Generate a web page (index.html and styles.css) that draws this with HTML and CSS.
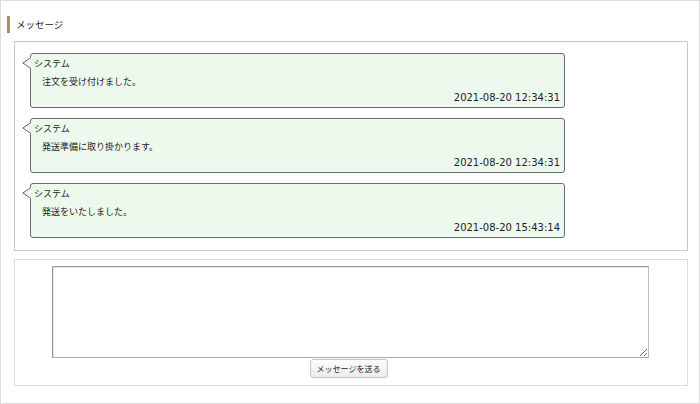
FILE: index.html
```html
<!DOCTYPE html>
<html lang="ja">
<head>
<meta charset="utf-8">
<title>メッセージ</title>
<link rel="stylesheet" href="styles.css">
</head>
<body>
<div class="page">
  <h2 class="heading">メッセージ</h2>
  <div class="message-list">
    <div class="bubble">
      <svg class="arrow" width="10" height="12" viewBox="0 0 10 12"><polygon points="10,0.5 8.5,0.5 0.8,6 8.5,11.5 10,11.5" fill="#eef9ee"/><polyline points="9,0.5 0.8,6 9,11.5" fill="none" stroke="#6a6a6a" stroke-width="1"/></svg>
      <div class="sender">システム</div>
      <div class="text">注文を受け付けました。</div>
      <div class="time">2021-08-20 12:34:31</div>
    </div>
    <div class="bubble">
      <svg class="arrow" width="10" height="12" viewBox="0 0 10 12"><polygon points="10,0.5 8.5,0.5 0.8,6 8.5,11.5 10,11.5" fill="#eef9ee"/><polyline points="9,0.5 0.8,6 9,11.5" fill="none" stroke="#6a6a6a" stroke-width="1"/></svg>
      <div class="sender">システム</div>
      <div class="text">発送準備に取り掛かります。</div>
      <div class="time">2021-08-20 12:34:31</div>
    </div>
    <div class="bubble">
      <svg class="arrow" width="10" height="12" viewBox="0 0 10 12"><polygon points="10,0.5 8.5,0.5 0.8,6 8.5,11.5 10,11.5" fill="#eef9ee"/><polyline points="9,0.5 0.8,6 9,11.5" fill="none" stroke="#6a6a6a" stroke-width="1"/></svg>
      <div class="sender">システム</div>
      <div class="text">発送をいたしました。</div>
      <div class="time">2021-08-20 15:43:14</div>
    </div>
  </div>
  <form class="reply-form">
    <textarea class="reply-input"></textarea>
    <button type="button" class="send-btn">メッセージを送る</button>
  </form>
</div>
</body>
</html>
```

FILE: styles.css
```css
* { box-sizing: border-box; }
html, body { margin: 0; padding: 0; background: #fff; }
body {
  font-family: "Noto Sans CJK JP", "Noto Sans", sans-serif;
  color: #222;
}
.page {
  width: 700px;
  height: 404px;
  border: 1px solid #dcdcdc;
  display: flex;
  flex-direction: column;
}
.heading {
  margin: 15px 0 0 6px;
  border-left: 3px solid #a8906a;
  padding-left: 6px;
  height: 17px;
  line-height: 17px;
  font-size: 9.5px;
  font-weight: normal;
  color: #222;
}
.message-list {
  margin: 8px 11px 0 13px;
  border: 1px solid #c8c8c8;
  padding: 11px 15px 12px 15px;
  display: flex;
  flex-direction: column;
  gap: 10px;
}
.bubble {
  position: relative;
  width: 535px;
  background: #eef9ee;
  border: 1px solid #6a6a6a;
  border-radius: 3px;
  padding: 3px 4px 2px 3px;
  font-size: 9px;
}
.arrow {
  position: absolute;
  left: -9px;
  top: 3px;
  display: block;
}
.sender {
  line-height: 14px;
  height: 14px;
}
.text {
  margin-top: 4px;
  margin-left: 8px;
  line-height: 14px;
  height: 14px;
}
.time {
  margin-top: 2px;
  line-height: 14px;
  height: 14px;
  text-align: right;
  font-family: "DejaVu Sans", sans-serif;
  font-size: 10px;
  color: #222;
}
.reply-form {
  margin: 8px 11px 0 13px;
  border: 1px solid #dcdcdc;
  padding: 6px 2px 7px 0;
  display: flex;
  flex-direction: column;
  align-items: center;
}
.reply-input {
  display: block;
  width: 597px;
  height: 92px;
  margin: 0;
  border: 1px solid #999;
  border-right-color: #bbb;
  border-bottom-color: #aaa;
  box-shadow: inset 1px 1px 0 #e4e4e4;
  background: #fff;
  font-size: 10px;
  resize: both;
}
.send-btn {
  margin-top: 1px;
  margin-right: 3px;
  width: 78px;
  height: 19px;
  padding: 0;
  border: 1px solid #c4c4c4;
  border-radius: 3px;
  background: linear-gradient(#fdfdfd, #ececec);
  font-family: "Noto Sans CJK JP", "Noto Sans", sans-serif;
  font-size: 8px;
  color: #222;
  line-height: 17px;
}
```
